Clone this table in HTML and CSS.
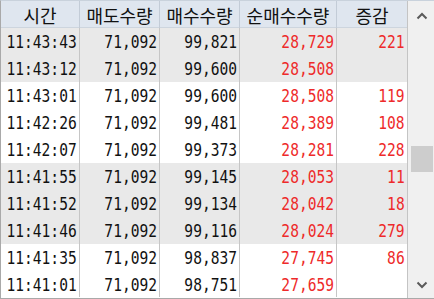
FILE: index.html
```html
<!DOCTYPE html>
<html lang="ko">
<head>
<meta charset="utf-8">
<link rel="stylesheet" href="styles.css">
</head>
<body>
<div class="grid-wrap">
  <div class="table">
    <div class="row head">
      <div class="cell">시간</div>
      <div class="cell">매도수량</div>
      <div class="cell">매수수량</div>
      <div class="cell">순매수수량</div>
      <div class="cell">증감</div>
    </div>
    <div class="row gray"><div class="cell num"><span>11:43:43</span></div><div class="cell num"><span>71,092</span></div><div class="cell num"><span>99,821</span></div><div class="cell num red"><span>28,729</span></div><div class="cell num red"><span>221</span></div></div>
    <div class="row gray"><div class="cell num"><span>11:43:12</span></div><div class="cell num"><span>71,092</span></div><div class="cell num"><span>99,600</span></div><div class="cell num red"><span>28,508</span></div><div class="cell num red"><span></span></div></div>
    <div class="row"><div class="cell num"><span>11:43:01</span></div><div class="cell num"><span>71,092</span></div><div class="cell num"><span>99,600</span></div><div class="cell num red"><span>28,508</span></div><div class="cell num red"><span>119</span></div></div>
    <div class="row"><div class="cell num"><span>11:42:26</span></div><div class="cell num"><span>71,092</span></div><div class="cell num"><span>99,481</span></div><div class="cell num red"><span>28,389</span></div><div class="cell num red"><span>108</span></div></div>
    <div class="row"><div class="cell num"><span>11:42:07</span></div><div class="cell num"><span>71,092</span></div><div class="cell num"><span>99,373</span></div><div class="cell num red"><span>28,281</span></div><div class="cell num red"><span>228</span></div></div>
    <div class="row gray"><div class="cell num"><span>11:41:55</span></div><div class="cell num"><span>71,092</span></div><div class="cell num"><span>99,145</span></div><div class="cell num red"><span>28,053</span></div><div class="cell num red"><span>11</span></div></div>
    <div class="row gray"><div class="cell num"><span>11:41:52</span></div><div class="cell num"><span>71,092</span></div><div class="cell num"><span>99,134</span></div><div class="cell num red"><span>28,042</span></div><div class="cell num red"><span>18</span></div></div>
    <div class="row gray"><div class="cell num"><span>11:41:46</span></div><div class="cell num"><span>71,092</span></div><div class="cell num"><span>99,116</span></div><div class="cell num red"><span>28,024</span></div><div class="cell num red"><span>279</span></div></div>
    <div class="row"><div class="cell num"><span>11:41:35</span></div><div class="cell num"><span>71,092</span></div><div class="cell num"><span>98,837</span></div><div class="cell num red"><span>27,745</span></div><div class="cell num red"><span>86</span></div></div>
    <div class="row last"><div class="cell num"><span>11:41:01</span></div><div class="cell num"><span>71,092</span></div><div class="cell num"><span>98,751</span></div><div class="cell num red"><span>27,659</span></div><div class="cell num red"><span></span></div></div>
  </div>
  <div class="scrollbar">
    <svg class="arrow" width="12" height="8" viewBox="0 0 12 8"><path d="M1.5 6.5 L6 2 L10.5 6.5" fill="none" stroke="#5a5a5a" stroke-width="2"/></svg>
    <div class="track"><div class="thumb"></div></div>
    <svg class="arrow" width="12" height="8" viewBox="0 0 12 8"><path d="M1.5 1.5 L6 6 L10.5 1.5" fill="none" stroke="#5a5a5a" stroke-width="2"/></svg>
  </div>
</div>
</body>
</html>
```
FILE: styles.css
```css
* { box-sizing: border-box; }
html, body { margin: 0; padding: 0; background: #ffffff; }
body { width: 434px; height: 299px; overflow: hidden; }

.grid-wrap {
  display: flex;
  width: 434px;
  height: 299px;
  border-bottom: 1px solid #a9a9a9;
  border-left: 1px solid #a9a9a9;
  border-top: 1px solid #c9d2dc;
}

.table {
  width: 407px;
  display: flex;
  flex-direction: column;
  border-right: 1px solid #c4c4c4;
}

.row {
  display: grid;
  grid-template-columns: 79px 80px 80px 97px 70px;
  height: 27px;
  background: #ffffff;
}
.row.gray { background: #e9e9e9; }
.row.last { height: 26px; }

.row.head {
  height: 27px;
  background: #dfe6ef;
  border-bottom: 1px solid #cdd5de;
}

.cell {
  border-right: 1px solid #c6c6c6;
  display: flex;
  align-items: center;
  overflow: visible;
}
.cell:last-child { border-right: none; }

.head .cell {
  justify-content: center;
  font-family: "Noto Sans CJK KR", sans-serif;
  font-size: 18px;
  color: #111;
  border-right: 1px solid #c3ccd7;
  padding-top: 1px;
}
.head .cell:last-child { border-right: none; }

.num {
  justify-content: flex-end;
  padding-right: 2px;
  font-family: "DejaVu Sans Mono", monospace;
  font-size: 18px;
  color: #111;
}
.num span {
  display: inline-block;
  white-space: nowrap;
  transform: scaleX(0.81);
  transform-origin: right center;
}
.red { color: #ee2a2a; }

.scrollbar {
  width: 26px;
  background: #f0f0f0;
  display: flex;
  flex-direction: column;
  align-items: center;
}
.arrow { margin: 11px 0 0 1px; flex: none; }
.arrow:last-child { margin: 0 0 9px 1px; }
.track {
  flex: 1;
  width: 100%;
  position: relative;
  padding-top: 126px;
  padding-left: 3px;
}
.thumb {
  width: 22px;
  height: 26px;
  background: #cdcdcd;
}
```
